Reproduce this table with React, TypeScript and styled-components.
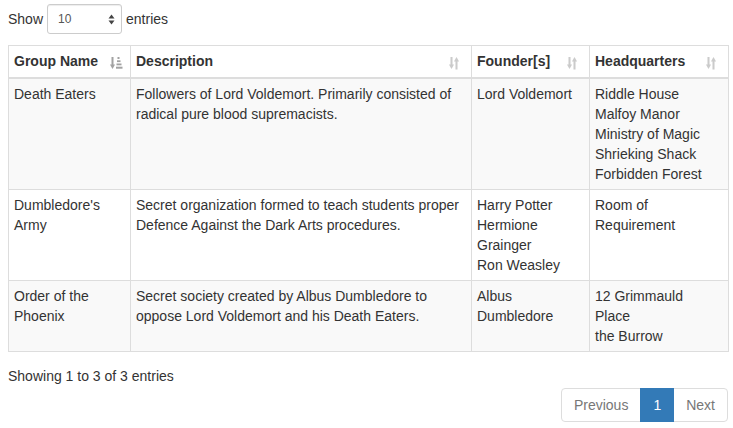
import React from "react";
import styled, { createGlobalStyle } from "styled-components";

const GlobalStyle = createGlobalStyle`
  html, body { margin: 0; padding: 0; background: #fff; }
  body {
    font-family: "Liberation Sans", Arial, Helvetica, sans-serif;
    font-size: 14px;
    line-height: 20px;
    color: #333;
  }
  * { box-sizing: border-box; }
`;

const Page = styled.div`
  width: 733px;
  padding: 4px 5px 0 8px;
`;

const LengthRow = styled.label`
  display: flex;
  align-items: center;
  gap: 4px;
  height: 30px;
  font-weight: normal;
`;

const SelectWrap = styled.div`
  position: relative;
  width: 75px;
  height: 30px;
`;

const Select = styled.select`
  appearance: none;
  -webkit-appearance: none;
  width: 100%;
  height: 100%;
  padding: 5px 10px;
  font-family: inherit;
  font-size: 12px;
  line-height: 18px;
  color: #555;
  background: #fff;
  border: 1px solid #ccc;
  border-radius: 3px;
  box-shadow: inset 0 1px 1px rgba(0, 0, 0, 0.075);
  outline: none;
`;

const SelectArrows = styled.svg`
  position: absolute;
  right: 7px;
  top: 10px;
  pointer-events: none;
`;

const Table = styled.table`
  margin-top: 11px;
  width: 720px;
  table-layout: fixed;
  border-collapse: collapse;
  border: 1px solid #ddd;
`;

const HeadCell = styled.th`
  position: relative;
  padding: 5px 30px 6px 5px;
  text-align: left;
  font-weight: bold;
  line-height: 20px;
  vertical-align: bottom;
  border: 1px solid #ddd;
  border-bottom-width: 2px;
  white-space: nowrap;
`;

const SortIcon = styled.svg<{ $active?: boolean }>`
  position: absolute;
  right: ${(p) => (p.$active ? 7 : 12)}px;
  bottom: 7px;
  opacity: ${(p) => (p.$active ? 0.45 : 0.25)};
`;

const Row = styled.tr<{ $odd: boolean }>`
  background: ${(p) => (p.$odd ? "#f9f9f9" : "#fff")};
`;

const Cell = styled.td`
  padding: 5px;
  vertical-align: top;
  line-height: 20px;
  border: 1px solid #ddd;
`;

const Info = styled.div`
  margin-top: 14px;
  line-height: 20px;
`;

const Pagination = styled.ul`
  display: flex;
  justify-content: flex-end;
  list-style: none;
  margin: 2px 0 0 0;
  padding: 0;
  width: 720px;
`;

const PageItem = styled.li<{ $active?: boolean; $first?: boolean; $last?: boolean }>`
  padding: 6px 12px;
  line-height: 20px;
  margin-left: -1px;
  color: ${(p) => (p.$active ? "#fff" : "#777")};
  background: ${(p) => (p.$active ? "#337ab7" : "#fff")};
  border: 1px solid ${(p) => (p.$active ? "#337ab7" : "#ddd")};
  position: ${(p) => (p.$active ? "relative" : "static")};
  z-index: ${(p) => (p.$active ? 2 : "auto")};
  border-radius: ${(p) =>
    p.$first ? "4px 0 0 4px" : p.$last ? "0 4px 4px 0" : "0"};
`;

const SortBoth = () => (
  <SortIcon width="10" height="14" viewBox="0 0 10 14">
    <g fill="#333">
      <rect x="1.5" y="1" width="2" height="8.5" />
      <polygon points="0,8.5 5,8.5 2.5,13" />
      <polygon points="5,5.5 10,5.5 7.5,1" />
      <rect x="6.5" y="5" width="2" height="8.5" />
    </g>
  </SortIcon>
);

const SortAsc = () => (
  <SortIcon $active width="13" height="14" viewBox="0 0 13 14">
    <g fill="#333">
      <rect x="1.5" y="1" width="2" height="8.5" />
      <polygon points="0,8.5 5,8.5 2.5,13" />
      <rect x="7.5" y="1" width="2" height="2" />
      <rect x="7" y="4.3" width="3.5" height="1.8" />
      <rect x="6.5" y="7.5" width="5" height="1.8" />
      <rect x="6" y="10.7" width="6.5" height="2" />
    </g>
  </SortIcon>
);

type Group = {
  name: React.ReactNode;
  desc: React.ReactNode;
  founders: React.ReactNode;
  hq: React.ReactNode;
};

const groups: Group[] = [
  {
    name: "Death Eaters",
    desc: (
      <>
        Followers of Lord Voldemort. Primarily consisted of
        <br />
        radical pure blood supremacists.
      </>
    ),
    founders: "Lord Voldemort",
    hq: (
      <>
        Riddle House
        <br />
        Malfoy Manor
        <br />
        Ministry of Magic
        <br />
        Shrieking Shack
        <br />
        Forbidden Forest
      </>
    ),
  },
  {
    name: "Dumbledore's Army",
    desc: (
      <>
        Secret organization formed to teach students proper
        <br />
        Defence Against the Dark Arts procedures.
      </>
    ),
    founders: (
      <>
        Harry Potter
        <br />
        Hermione Grainger
        <br />
        Ron Weasley
      </>
    ),
    hq: "Room of Requirement",
  },
  {
    name: "Order of the Phoenix",
    desc: (
      <>
        Secret society created by Albus Dumbledore to
        <br />
        oppose Lord Voldemort and his Death Eaters.
      </>
    ),
    founders: "Albus Dumbledore",
    hq: (
      <>
        12 Grimmauld
        <br />
        Place
        <br />
        the Burrow
      </>
    ),
  },
];

export default function App() {
  return (
    <>
      <GlobalStyle />
      <Page>
        <LengthRow>
          Show
          <SelectWrap>
            <Select defaultValue="10">
              <option value="10">10</option>
              <option value="25">25</option>
              <option value="50">50</option>
              <option value="100">100</option>
            </Select>
            <SelectArrows width="7" height="11" viewBox="0 0 7 11">
              <polygon points="0.5,4.5 6.5,4.5 3.5,0.5" fill="#444" />
              <polygon points="0.5,6.5 6.5,6.5 3.5,10.5" fill="#444" />
            </SelectArrows>
          </SelectWrap>
          entries
        </LengthRow>
        <Table>
          <colgroup>
            <col style={{ width: 122 }} />
            <col style={{ width: 341 }} />
            <col style={{ width: 118 }} />
            <col style={{ width: 139 }} />
          </colgroup>
          <thead>
            <tr>
              <HeadCell>
                Group Name
                <SortAsc />
              </HeadCell>
              <HeadCell>
                Description
                <SortBoth />
              </HeadCell>
              <HeadCell>
                Founder[s]
                <SortBoth />
              </HeadCell>
              <HeadCell>
                Headquarters
                <SortBoth />
              </HeadCell>
            </tr>
          </thead>
          <tbody>
            {groups.map((g, i) => (
              <Row key={i} $odd={i % 2 === 0}>
                <Cell>{g.name}</Cell>
                <Cell>{g.desc}</Cell>
                <Cell>{g.founders}</Cell>
                <Cell>{g.hq}</Cell>
              </Row>
            ))}
          </tbody>
        </Table>
        <Info>Showing 1 to 3 of 3 entries</Info>
        <Pagination>
          <PageItem $first>Previous</PageItem>
          <PageItem $active>1</PageItem>
          <PageItem $last>Next</PageItem>
        </Pagination>
      </Page>
    </>
  );
}
